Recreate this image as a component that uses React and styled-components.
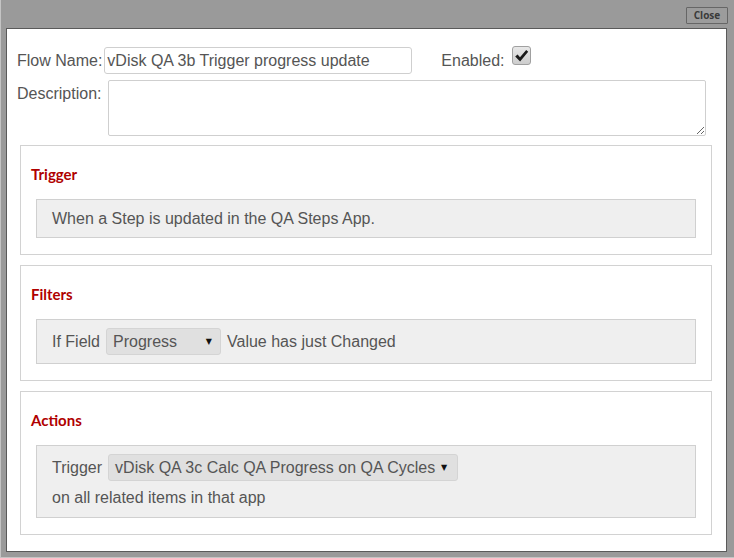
import React from "react";
import styled, { createGlobalStyle } from "styled-components";

const GlobalStyle = createGlobalStyle`
  html, body {
    margin: 0;
    padding: 0;
    background: #999;
  }
`;

const Frame = styled.div`
  width: 734px;
  height: 558px;
  box-sizing: border-box;
  display: flex;
  flex-direction: column;
  padding: 0 7px 5px 5px;
  background: #9a9a9a;
  border-left: 1px solid #c4c4c4;
  border-bottom: 1px solid #c4c4c4;
  font-family: "Liberation Sans", Arial, sans-serif;
`;

const TitleBar = styled.div`
  height: 28px;
  box-sizing: border-box;
  display: flex;
  justify-content: flex-end;
  align-items: flex-start;
  padding-top: 7px;
`;

const CloseButton = styled.button`
  height: 17px;
  width: 42px;
  margin-right: -1px;
  padding: 0;
  box-sizing: border-box;
  background: #9c9c9c;
  border: 1px solid #666;
  border-radius: 1px;
  color: #3a3a3a;
  font-family: "Open Sans", "DejaVu Sans", sans-serif;
  font-weight: 700;
  font-size: 10px;
  line-height: 15px;
  cursor: pointer;
`;

const Panel = styled.div`
  flex: 1;
  box-sizing: border-box;
  background: #fff;
  border: 1px solid #5a5a5a;
  padding: 18px 14px 16px 10px;
  display: flex;
  flex-direction: column;
  color: #555;
  font-size: 16px;
`;

const FieldRow = styled.div`
  display: flex;
  align-items: ${(p) => (p.$top ? "flex-start" : "center")};
  margin-bottom: ${(p) => p.$gap || 0}px;
`;

const Label = styled.span`
  line-height: 18px;
  margin-right: ${(p) => p.$space || 2}px;
  margin-left: ${(p) => p.$offset || 0}px;
  margin-top: ${(p) => p.$drop || 0}px;
  white-space: nowrap;
`;

const TextInput = styled.input`
  width: 308px;
  height: 27px;
  box-sizing: border-box;
  border: 1px solid #cfcfcf;
  border-radius: 3px;
  padding: 0 2px;
  font-family: "Liberation Sans", Arial, sans-serif;
  font-size: 16px;
  color: #555;
  outline: none;
`;

const TextArea = styled.textarea`
  width: 598px;
  height: 56px;
  box-sizing: border-box;
  border: 1px solid #cfcfcf;
  border-radius: 2px;
  padding: 3px;
  font-family: "Liberation Sans", Arial, sans-serif;
  font-size: 16px;
  color: #555;
  outline: none;
`;

const CheckBox = styled.span`
  width: 19px;
  height: 19px;
  box-sizing: border-box;
  align-self: flex-start;
  margin-top: -1px;
  display: flex;
  align-items: center;
  justify-content: center;
  border: 1px solid #a0a0a0;
  border-radius: 3px;
  background: linear-gradient(#e8e8e8, #cdcdcd);
`;

const Section = styled.section`
  margin: ${(p) => (p.$first ? 9 : 10)}px 0 0 3px;
  border: 1px solid #d2d2d2;
  padding: 20px 15px 16px 15px;
`;

const SectionTitle = styled.h3`
  margin: 0 0 16px -5px;
  font-family: Lato, "Open Sans", sans-serif;
  font-weight: 700;
  font-size: 15px;
  line-height: 17px;
  color: #b00000;
`;

const Well = styled.div`
  background: #efefef;
  border: 1px solid #d0d0d0;
  padding: ${(p) => p.$pad || "9px 15px"};
  line-height: 19px;
`;

const WellRow = styled.div`
  display: flex;
  align-items: center;
  gap: 6px;
  height: 27px;
`;

const WellLine = styled.div`
  margin-top: 7px;
  line-height: 19px;
`;

const Select = styled.div`
  width: ${(p) => p.$width}px;
  height: 27px;
  box-sizing: border-box;
  display: flex;
  align-items: center;
  justify-content: space-between;
  padding: 0 ${(p) => p.$right || 8}px 0 6px;
  margin-top: -1px;
  background: #e0e0e0;
  border: 1px solid #d4d4d4;
  border-radius: 3px;
  color: #555;
  white-space: nowrap;
`;

const Caret = styled.span`
  font-size: 8px;
  color: #111;
  font-family: "DejaVu Sans", sans-serif;
`;

const Check = () => (
  <svg width="15" height="14" viewBox="0 0 15 14">
    <path
      d="M1.2 7.6 L3.6 5.4 L6 8.2 L12.2 1 L14.2 2.8 L6.1 12.6 Z"
      fill="#1a1a1a"
    />
  </svg>
);

const App = () => (
  <>
    <GlobalStyle />
    <Frame>
      <TitleBar>
        <CloseButton>Close</CloseButton>
      </TitleBar>
      <Panel>
        <FieldRow $gap={6}>
          <Label>Flow Name:</Label>
          <TextInput readOnly value="vDisk QA 3b Trigger progress update" />
          <Label $offset={29} $space={7}>
            Enabled:
          </Label>
          <CheckBox>
            <Check />
          </CheckBox>
        </FieldRow>
        <FieldRow $top>
          <Label $space={7} $drop={5}>
            Description:
          </Label>
          <TextArea readOnly />
        </FieldRow>

        <Section $first>
          <SectionTitle>Trigger</SectionTitle>
          <Well>When a Step is updated in the QA Steps App.</Well>
        </Section>

        <Section>
          <SectionTitle>Filters</SectionTitle>
          <Well $pad="8px 15px">
            <WellRow>
              <span>If Field</span>
              <Select $width={115}>
                Progress <Caret>▼</Caret>
              </Select>
              <span>Value has just Changed</span>
            </WellRow>
          </Well>
        </Section>

        <Section>
          <SectionTitle>Actions</SectionTitle>
          <Well $pad="8px 15px 10px">
            <WellRow>
              <span>Trigger</span>
              <Select $width={350} $right={10}>
                vDisk QA 3c Calc QA Progress on QA Cycles <Caret>▼</Caret>
              </Select>
            </WellRow>
            <WellLine>on all related items in that app</WellLine>
          </Well>
        </Section>
      </Panel>
    </Frame>
  </>
);

export default App;
